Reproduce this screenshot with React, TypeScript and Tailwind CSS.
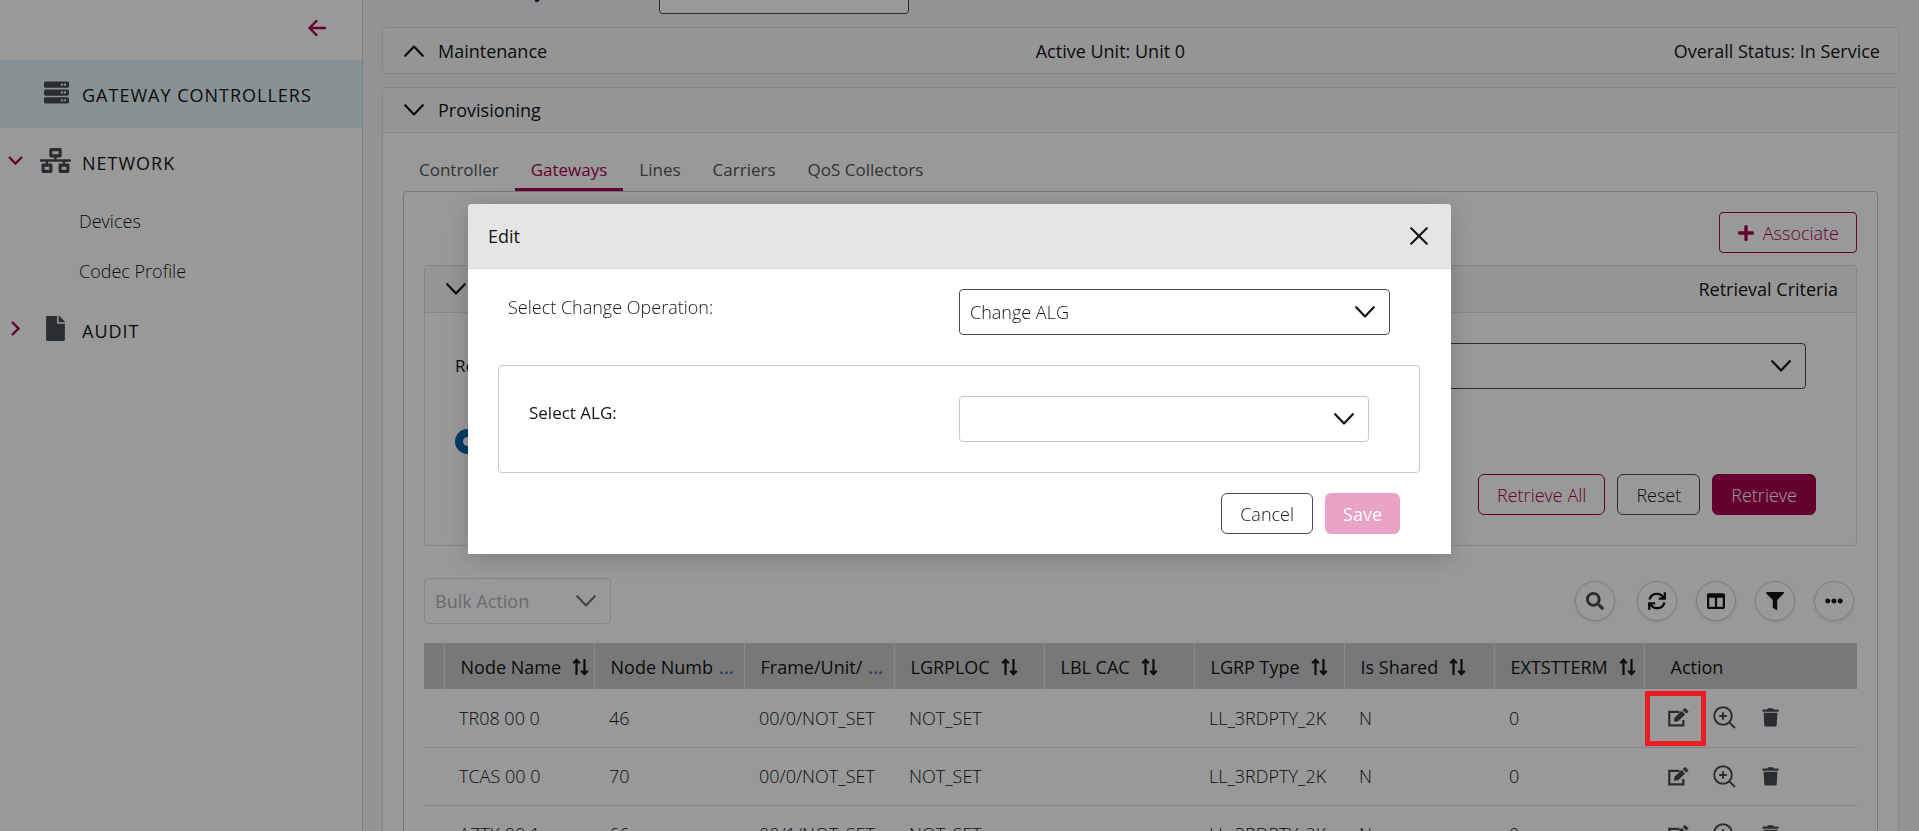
import React from "react";
import { FaServer, FaNetworkWired, FaFile, FaSearch, FaColumns, FaFilter, FaEllipsisH, FaPlus } from "react-icons/fa";

type IconProps = { className?: string };

function Chevron({ className = "" }: IconProps) {
  return (
    <svg viewBox="0 0 20 12" className={`h-3 w-5 shrink-0 ${className}`} fill="none" stroke="currentColor" strokeWidth="2.2" strokeLinecap="round" strokeLinejoin="round" aria-hidden="true">
      <path d="M1.2 1.2 10 10.4 18.8 1.2" />
    </svg>
  );
}

function SmallChevron({ className = "" }: IconProps) {
  return (
    <svg viewBox="0 0 15 9" className={`h-[9px] w-[15px] ${className}`} fill="none" stroke="currentColor" strokeWidth="2.4" aria-hidden="true">
      <path d="M1 1 7.5 7.5 14 1" />
    </svg>
  );
}

function SortIcon() {
  return (
    <svg viewBox="0 0 17 18" className="h-[18px] w-[17px] shrink-0" fill="none" stroke="currentColor" strokeWidth="2.2" aria-hidden="true">
      <path d="M4.5 17V2M1.2 5.2 4.500 1.900 7.800 5.200M12.500 1V16M9.200 12.800 12.500 16.100 15.800 12.800" />
    </svg>
  );
}

function RefreshIcon() {
  return (
    <svg viewBox="0 0 18 18" className="h-[18px] w-[18px]" fill="none" stroke="currentColor" strokeWidth="2.3" aria-hidden="true">
      <path d="M1.500 7.500A7.600 7.600 0 0 1 15.300 5.400M16.800.3V6.600H10.800M16.500 10.500A7.600 7.600 0 0 1 2.700 12.600M1.200 17.700V11.400H7.200" />
    </svg>
  );
}

function EditIcon() {
  return (
    <svg viewBox="0 0 21 19" className="h-[19px] w-[21px]" aria-hidden="true">
      <path d="M11.500 3.900H1.300V17.300H15.300V12" fill="none" stroke="currentColor" strokeWidth="2.200" />
      <path d="M5.900 13.700 6.500 9.700 13.600 2.800 17.200 6.400 10.100 13.200ZM14.600 1.900 16 .6Q16.900-.2 17.800.6L20 2.700Q20.800 3.500 20 4.300L18.200 5.500Z" fill="currentColor" />
    </svg>
  );
}

function ZoomInIcon() {
  return (
    <svg viewBox="0 0 23 23" className="h-[23px] w-[23px]" fill="none" stroke="currentColor" strokeWidth="1.9" aria-hidden="true">
      <circle cx="10" cy="10" r="8.8" />
      <path d="M16.300 16.300 22 22M10 6.200V13.800M6.200 10H13.800" />
    </svg>
  );
}

function TrashIcon() {
  return (
    <svg viewBox="0 0 17 19" className="h-[19px] w-[17px]" fill="currentColor" aria-hidden="true">
      <path d="M.5 1.500H5.200L6 .3H11L11.800 1.500H16.500V3.700H.5ZM1.600 4.800H15.400L14.700 17.200C14.600 18 14 18.600 13.200 18.600H3.800C3 18.600 2.400 18 2.300 17.200Z" />
    </svg>
  );
}

type SelectBoxProps = { id: string; value: string; label?: string; className?: string; chevronClass?: string };

function SelectBox({ id, value, label, className = "", chevronClass = "" }: SelectBoxProps) {
  return (
    <div className="relative">
      <select id={id} aria-label={label} defaultValue={value} className={`h-[46px] w-full appearance-none rounded border bg-white px-2.5 text-lg ${className}`}>
        <option value={value}>{value}</option>
      </select>
      <Chevron className={`pointer-events-none absolute right-[15px] top-[17px] ${chevronClass}`} />
    </div>
  );
}

const columns = [
  { title: "Node Name", sort: true },
  { title: "Node Numb", sort: false },
  { title: "Frame/Unit/", sort: false },
  { title: "LGRPLOC", sort: true },
  { title: "LBL CAC", sort: true },
  { title: "LGRP Type", sort: true },
  { title: "Is Shared", sort: true },
  { title: "EXTSTTERM", sort: true },
];

const rows = [
  ["TR08 00 0", "46", "00/0/NOT_SET", "NOT_SET", "", "LL_3RDPTY_2K", "N", "0"],
  ["TCAS 00 0", "70", "00/0/NOT_SET", "NOT_SET", "", "LL_3RDPTY_2K", "N", "0"],
  ["AZTK 00 1", "66", "00/1/NOT_SET", "NOT_SET", "", "LL_3RDPTY_2K", "N", "0"],
];

const tools = [
  { label: "Search", icon: <FaSearch size={18} className="text-[#454c50]" /> },
  { label: "Refresh", icon: <RefreshIcon /> },
  { label: "Columns", icon: <FaColumns size={18} /> },
  { label: "Filter", icon: <FaFilter size={18} /> },
  { label: "More", icon: <FaEllipsisH size={18} /> },
];

const tabs = ["Controller", "Gateways", "Lines", "Carriers", "QoS Collectors"];

function Sidebar() {
  return (
    <nav className="w-[363px] shrink-0 border-r border-[#d4d4d8] bg-white">
      <div className="flex h-15 items-center justify-end pr-9 pb-1">
        <button aria-label="Collapse menu" className="text-[#a8024f]">
          <svg viewBox="0 0 18 18" className="h-[18px] w-[18px]" fill="none" stroke="currentColor" strokeWidth="2.4" strokeLinecap="round" strokeLinejoin="round" aria-hidden="true">
            <path d="M17 9H2M8.500 2 1.500 9 8.500 16" />
          </svg>
        </button>
      </div>
      <a href="#controllers" className="flex h-17 items-center bg-[#e3f2f6] pt-0.5 pl-11 text-lg font-medium tracking-[1px]">
        <FaServer size={25} className="mb-1.5 text-[#454c50]" />
        <span className="pl-[13px]">GATEWAY CONTROLLERS</span>
      </a>
      <a href="#network" className="flex h-17 items-center pt-0.5 pl-2 text-lg font-medium tracking-[1px]">
        <SmallChevron className="mb-1.5 text-[#a8024f]" />
        <span className="flex w-[59px] justify-end pr-[11px]"><FaNetworkWired size={31} className="mb-1.5 shrink-0 text-[#454c50]" /></span>
        NETWORK
      </a>
      <a href="#devices" className="flex h-[50px] items-center pl-[79px] text-lg font-light">Devices</a>
      <a href="#codec" className="flex h-[50px] items-center pl-[79px] text-lg font-light">Codec Profile</a>
      <a href="#audit" className="flex h-17 items-center pt-0.5 pl-2 text-lg font-medium tracking-[1px]">
        <SmallChevron className="mb-1.5 -rotate-90 text-[#a8024f]" />
        <span className="flex w-[59px] justify-end pr-[14px]"><FaFile size={25} className="mb-1.5 text-[#454c50]" /></span>
        AUDIT
      </a>
    </nav>
  );
}

function GatewaysPanel() {
  return (
    <div className="rounded border border-[#c8c8c8] p-5">
      <div className="flex justify-end">
        <button className="flex h-[41px] items-center gap-2 rounded border border-[#a8024f] px-[17px] text-lg font-light text-[#a8024f]">
          <FaPlus size={18} />
          Associate
        </button>
      </div>
      <section className="mt-3 rounded border border-[#e0e0e3]">
        <div className="flex h-[47px] items-center justify-between border-b border-[#e0e0e3] bg-[#f8f8fb] pr-[18px] pl-[21px] text-lg font-medium">
          <Chevron />
          Retrieval Criteria
        </div>
        <div className="py-[30px] pr-10 pl-[30px]">
          <div className="grid grid-cols-2 items-center pr-2.5">
            <label htmlFor="retrieve-by" className="text-[17px] font-medium">Retrieve By:</label>
            <SelectBox id="retrieve-by" value="" className="border-[#454c50]" />
          </div>
          <div className="mt-10 flex">
            <input type="radio" aria-label="All" defaultChecked className="h-[25px] w-[25px] appearance-none rounded-full border-[8px] border-[#0064a8] bg-white" />
          </div>
          <div className="mt-5 flex justify-end gap-3 text-lg font-light">
            <button className="h-[41px] rounded-md border border-[#a8024f] px-[18px] text-[#a8024f]">Retrieve All</button>
            <button className="h-[41px] rounded-md border border-[#454c50] px-[18px]">Reset</button>
            <button className="h-[41px] rounded-md border border-[#a8024f] bg-[#a8024f] px-[18px] text-white">Retrieve</button>
          </div>
        </div>
      </section>
      <div className="mt-8 flex items-center justify-between">
        <div className="w-[187px]">
          <SelectBox id="bulk" label="Bulk Action" value="Bulk Action" className="border-[#e0e0e3] text-[#b0b3b5]" chevronClass="text-[#747474]" />
        </div>
        <div className="flex gap-[19px] pr-[3px]">
          {tools.map((t) => (
            <button key={t.label} aria-label={t.label} className="flex h-10 w-10 items-center justify-center rounded-full border border-[#d0d0d0] shadow first:mr-[3px]">
              {t.icon}
            </button>
          ))}
        </div>
      </div>
      <table className="mt-[19px] w-full table-fixed border-collapse text-left text-lg">
        <thead>
          <tr className="h-[46px] bg-[#c8c8c8]">
            <th className="w-5" aria-label="Selection" />
            {columns.map((c) => (
              <th key={c.title} className="w-[150px] border-l border-[#e5e5e5] pt-0.5 pl-4 font-medium whitespace-nowrap">
                <span className="flex items-center">
                  {c.title}
                  {c.sort ? <span className="pl-[11px]"><SortIcon /></span> : <span className="pl-1.5 font-semibold text-[#436a94]">...</span>}
                </span>
              </th>
            ))}
            <th className="border-l border-[#e5e5e5] pt-0.5 pl-[26px] font-medium">Action</th>
          </tr>
        </thead>
        <tbody>
          {rows.map((row, i) => (
            <tr key={row[0]} className="h-[58px] border-b border-[#e0e0e0] font-light">
              <td />
              {row.map((cell, j) => (
                <td key={j} className="pl-[15px] whitespace-nowrap">{cell}</td>
              ))}
              <td className="relative pl-6 text-[#454c50]">
                {i === 0 && <span className="absolute top-0.5 left-px z-20 h-[55px] w-[61px] border-[5px] border-[#ec1c24]" />}
                <span className="flex items-center">
                  <button aria-label="Edit"><EditIcon /></button>
                  <button aria-label="Details" className="ml-6"><ZoomInIcon /></button>
                  <button aria-label="Delete" className="ml-[26px]"><TrashIcon /></button>
                </span>
              </td>
            </tr>
          ))}
        </tbody>
      </table>
    </div>
  );
}

function EditDialog() {
  return (
    <div className="fixed inset-0 z-10 flex items-start justify-center bg-black/40 pt-51">
      <div role="dialog" aria-labelledby="dialog-title" className="w-full max-w-[983px] overflow-hidden rounded-t bg-white shadow-[0_4px_24px_rgba(0,0,0,0.2)]">
        <div className="flex h-[65px] items-center justify-between border-b border-[#dcdcdc] bg-[#e5e5e5] pr-[23px] pl-5">
          <h2 id="dialog-title" className="text-lg font-medium">Edit</h2>
          <button aria-label="Close">
            <svg viewBox="0 0 18 18" className="h-[18px] w-[18px]" stroke="currentColor" strokeWidth="2.1" strokeLinecap="round" aria-hidden="true">
              <path d="M1.200 1.200 16.800 16.800M16.800 1.200 1.200 16.800" />
            </svg>
          </button>
        </div>
        <div className="py-5 pr-[31px] pl-[30px]">
          <div className="grid grid-cols-2">
            <label htmlFor="operation" className="pt-1 pl-2.5 text-lg font-light">Select Change Operation:</label>
            <div className="pr-[30px]">
              <SelectBox id="operation" value="Change ALG" className="border-[#454c50] font-light" />
            </div>
          </div>
          <div className="mt-[30px] grid grid-cols-2 rounded border border-[#c8c8c8] py-[30px]">
            <label htmlFor="alg" className="pt-1 pl-[30px] text-[17px] font-medium">Select ALG:</label>
            <div className="pr-[50px]">
              <SelectBox id="alg" value="" className="border-[#c8c8c8]" />
            </div>
          </div>
          <div className="mt-5 flex justify-end gap-3 pr-5 text-lg">
            <button className="h-[41px] rounded-md border border-[#454c50] px-[18px] font-light">Cancel</button>
            <button disabled className="h-[41px] rounded-md bg-[#e8a3c6] px-[18px] text-white">Save</button>
          </div>
        </div>
      </div>
    </div>
  );
}

export default function App() {
  return (
    <div className="flex h-screen overflow-hidden bg-[#f5f5f9] font-['Open_Sans','Noto_Sans',sans-serif] text-[#121516]">
      <Sidebar />
      <main className="min-w-0 flex-1 pr-5 pl-[19px]">
        <div className="flex h-3.5 items-end overflow-hidden">
          <div className="flex flex-1 items-center">
            <label htmlFor="gateway" className="w-[277px] pl-[30px] text-lg font-semibold">Select Gateway</label>
            <div className="w-[250px]">
              <SelectBox id="gateway" value="" className="border-[#454c50]" />
            </div>
          </div>
        </div>
        <section className="mt-[13px] flex h-[47px] items-center justify-between rounded border border-[#e0e0e6] bg-[#f8f8fb] pr-[18px] pl-[21px] text-lg font-medium">
          <span className="flex items-center gap-3.5"><Chevron className="rotate-180" />Maintenance</span>
          <span>Active Unit: Unit 0</span>
          <span>Overall Status: In Service</span>
        </section>
        <section className="mt-[13px] rounded border border-[#e0e0e6] bg-white">
          <div className="flex h-[45px] items-center gap-3.5 border-b border-[#e0e0e6] bg-[#f8f8fb] pl-[21px] text-lg font-medium">
            <Chevron />
            Provisioning
          </div>
          <div className="p-5 pt-3.5">
            <div role="tablist" className="flex text-[17px] font-medium text-[#505759]">
              {tabs.map((tab) => (
                <button
                  key={tab}
                  role="tab"
                  aria-selected={tab === "Gateways"}
                  className="h-11 border-b-3 border-transparent px-4 pt-[5px] aria-selected:border-[#a8024f] aria-selected:text-[#a8024f]"
                >
                  {tab}
                </button>
              ))}
            </div>
            <GatewaysPanel />
          </div>
        </section>
      </main>
      <EditDialog />
    </div>
  );
}
